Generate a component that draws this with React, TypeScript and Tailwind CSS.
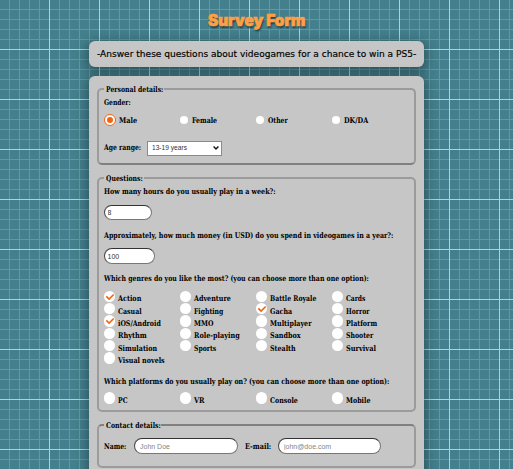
import { useLayoutEffect, useRef, useState } from "react";
import type { ReactNode } from "react";

/** A single line of text, condensed or widened to the given width. */
function Line({ w, children, className = "" }: { w: number; children: string; className?: string }) {
  const ref = useRef<HTMLSpanElement>(null);
  const [scale, setScale] = useState(1);
  useLayoutEffect(() => {
    if (ref.current) setScale(w / ref.current.offsetWidth);
  }, [w]);
  return (
    <span className={"block shrink-0 whitespace-nowrap " + className} style={{ width: w }}>
      <span ref={ref} className="inline-block origin-left" style={{ transform: `scaleX(${scale})` }}>
        {children}
      </span>
    </span>
  );
}

function Group({ title, w, className, children }: { title: string; w: number; className: string; children: ReactNode }) {
  return (
    <fieldset className={"rounded-[5px] border-2 border-[#9b9b9b] px-[5px] " + className}>
      <legend className="h-3 pr-px pl-[1.5px] leading-[13px]">
        <Line w={w}>{title}</Line>
      </legend>
      {children}
    </fieldset>
  );
}

function Question({ w, children, className = "" }: { w: number; children: string; className?: string }) {
  return (
    <div className={"h-3.5 leading-[15px] " + className}>
      <Line w={w}>{children}</Line>
    </div>
  );
}

const field =
  "block rounded-full border-[1.5px] border-t-[#333] border-l-[#444] border-r-[#777] border-b-[#777] bg-white font-['Liberation_Sans',sans-serif] font-normal text-[7px] text-[#333] outline-none placeholder:text-[#858585] placeholder:opacity-100";

type Option = [string, number, boolean?];

function Check({ option: [label, w, on] }: { option: Option }) {
  return (
    <label className="flex h-[12.4px] items-center">
      <span className="flex size-[11.4px] shrink-0 items-center justify-center rounded-full bg-white">
        {on && (
          <svg viewBox="0 0 12 12" className="size-[11.4px]" fill="none" stroke="#f26411" strokeWidth="1.7">
            <path d="M2.4 5.6 5.4 8.5 10.2 3.7" />
          </svg>
        )}
      </span>
      <span className="ml-[3px] pt-[6px] leading-[12px]">
        <Line w={w}>{label}</Line>
      </span>
    </label>
  );
}

const genders: Option[] = [["Male", 17.7, true], ["Female", 25], ["Other", 20], ["DK/DA", 24]];

const genres: Option[] = [
  ["Action", 23, true], ["Adventure", 37.3], ["Battle Royale", 46.5], ["Cards", 19.7],
  ["Casual", 23.3], ["Fighting", 29.7], ["Gacha", 21.7, true], ["Horror", 23.3],
  ["iOS/Android", 43, true], ["MMO", 19.7], ["Multiplayer", 41.7], ["Platform", 31.5],
  ["Rhythm", 29], ["Role-playing", 45.3], ["Sandbox", 30.3], ["Shooter", 27.3],
  ["Simulation", 39], ["Sports", 22.7], ["Stealth", 25.3], ["Survival", 30],
  ["Visual novels", 47],
];

const platforms: Option[] = [["PC", 9.7], ["VR", 10.3], ["Console", 27.7], ["Mobile", 24.3]];

const grid =
  "bg-[#437f8c] bg-[linear-gradient(to_top,#b7ced2_1px,transparent_1px),linear-gradient(to_left,#b7ced2_1px,transparent_1px),linear-gradient(to_top,#6397a2_1px,transparent_1px),linear-gradient(to_left,#6397a2_1px,transparent_1px)] bg-[size:50px_50px,50px_50px,10px_10px,10px_10px]";

export default function App() {
  return (
    <div className={"flex h-[469px] w-full flex-col items-center overflow-hidden font-['DejaVu_Serif_Condensed','DejaVu_Serif',serif] text-[7.8px] font-bold text-black " + grid}>
      <h1 className="h-[41px] shrink-0 pt-[10px] font-['Inter',sans-serif] text-[16px] leading-5 font-black text-[#ff9f45] [-webkit-text-stroke:0.7px_#ff9f45] [text-shadow:1px_2px_2px_#1c3b42]">
        <Line w={97.5}>Survey Form</Line>
      </h1>
      <header className="flex h-[26px] w-[335px] shrink-0 items-center justify-center rounded-[6px] bg-[#c6c6c6] pt-[2px] font-['DejaVu_Sans',sans-serif] text-[8px] font-normal shadow-[0_3px_12px_2px_rgba(0,0,0,0.35)] [-webkit-text-stroke:0.15px_#000]">
        <Line w={319}>-Answer these questions about videogames for a chance to win a PS5-</Line>
      </header>
      <form className="mt-[9px] h-[420px] w-[335px] shrink-0 rounded-t-[6px] bg-[#c6c6c6] px-2 pt-[7px] shadow-[0_3px_12px_2px_rgba(0,0,0,0.35)]">
        <Group title="Personal details:" w={57.7} className="h-[82px] border-b-[#808080]">
          <Question w={26.5}>Gender:</Question>
          <div className="grid h-[22px] grid-cols-[repeat(4,76px)] items-center">
            {genders.map(([label, w, on]) => (
              <label key={label} className="flex items-center">
                {on ? (
                  <span className="mr-[3.5px] flex size-[11.5px] items-center justify-center rounded-full border-[1.5px] border-[#f26411] bg-white">
                    <span className="size-[5.5px] rounded-full bg-[#f26411]" />
                  </span>
                ) : (
                  <span className="mr-[3.7px] size-[8.3px] rounded-full bg-white" />
                )}
                <Line w={w} className="pt-px">{label}</Line>
              </label>
            ))}
          </div>
          <div className="mt-[9px] flex h-4 items-center">
            <Line w={37.5}>Age range:</Line>
            <div className="ml-[5.5px] flex h-[15px] w-[75px] items-center justify-between border border-[#8a8a8a] bg-white pr-[2px] pl-1 font-['Liberation_Sans',sans-serif] text-[7px] font-normal text-[#333]">
              <Line w={35}>13-19 years</Line>
              <svg viewBox="0 0 6 4" className="h-1 w-1.5" fill="none" stroke="#111" strokeWidth="1.4">
                <path d="M.6 .6 3 3 5.4 .6" />
              </svg>
            </div>
          </div>
        </Group>

        <Group title="Questions:" w={37} className="mt-[7px] h-[240px]">
          <Question w={172}>How many hours do you usually play in a week?:</Question>
          <input className={field + " mt-[7px] h-[15px] w-[47.5px] pl-[2.5px]"} defaultValue="8" />
          <Question w={289.5} className="mt-2">Approximately, how much money (in USD) do you spend in videogames in a year?:</Question>
          <input className={field + " mt-[6px] h-4 w-[51px] pl-[2.5px]"} defaultValue="100" />
          <Question w={265.3} className="mt-[7px]">Which genres do you like the most? (you can choose more than one option):</Question>
          <div className="mt-[5px] grid grid-cols-[repeat(4,76px)]">
            {genres.map((g) => <Check key={g[0]} option={g} />)}
          </div>
          <Question w={285} className="mt-[9.5px]">Which platforms do you usually play on? (you can choose more than one option):</Question>
          <div className="mt-1 grid grid-cols-[repeat(4,76px)]">
            {platforms.map((p) => <Check key={p[0]} option={p} />)}
          </div>
        </Group>

        <Group title="Contact details:" w={54.7} className="mt-[7px] h-[49px] border-t-[#808080]">
          <div className="mt-[7px] flex h-4 items-center">
            <Line w={22} className="pt-px">Name:</Line>
            <input className={field + " ml-[8px] h-4 w-[104px] pl-[5px]"} placeholder="John Doe" />
            <Line w={26} className="ml-[7px] pt-px">E-mail:</Line>
            <input className={field + " ml-[7px] h-4 w-[103px] pl-[5px]"} placeholder="john@doe.com" />
          </div>
        </Group>
      </form>
    </div>
  );
}
